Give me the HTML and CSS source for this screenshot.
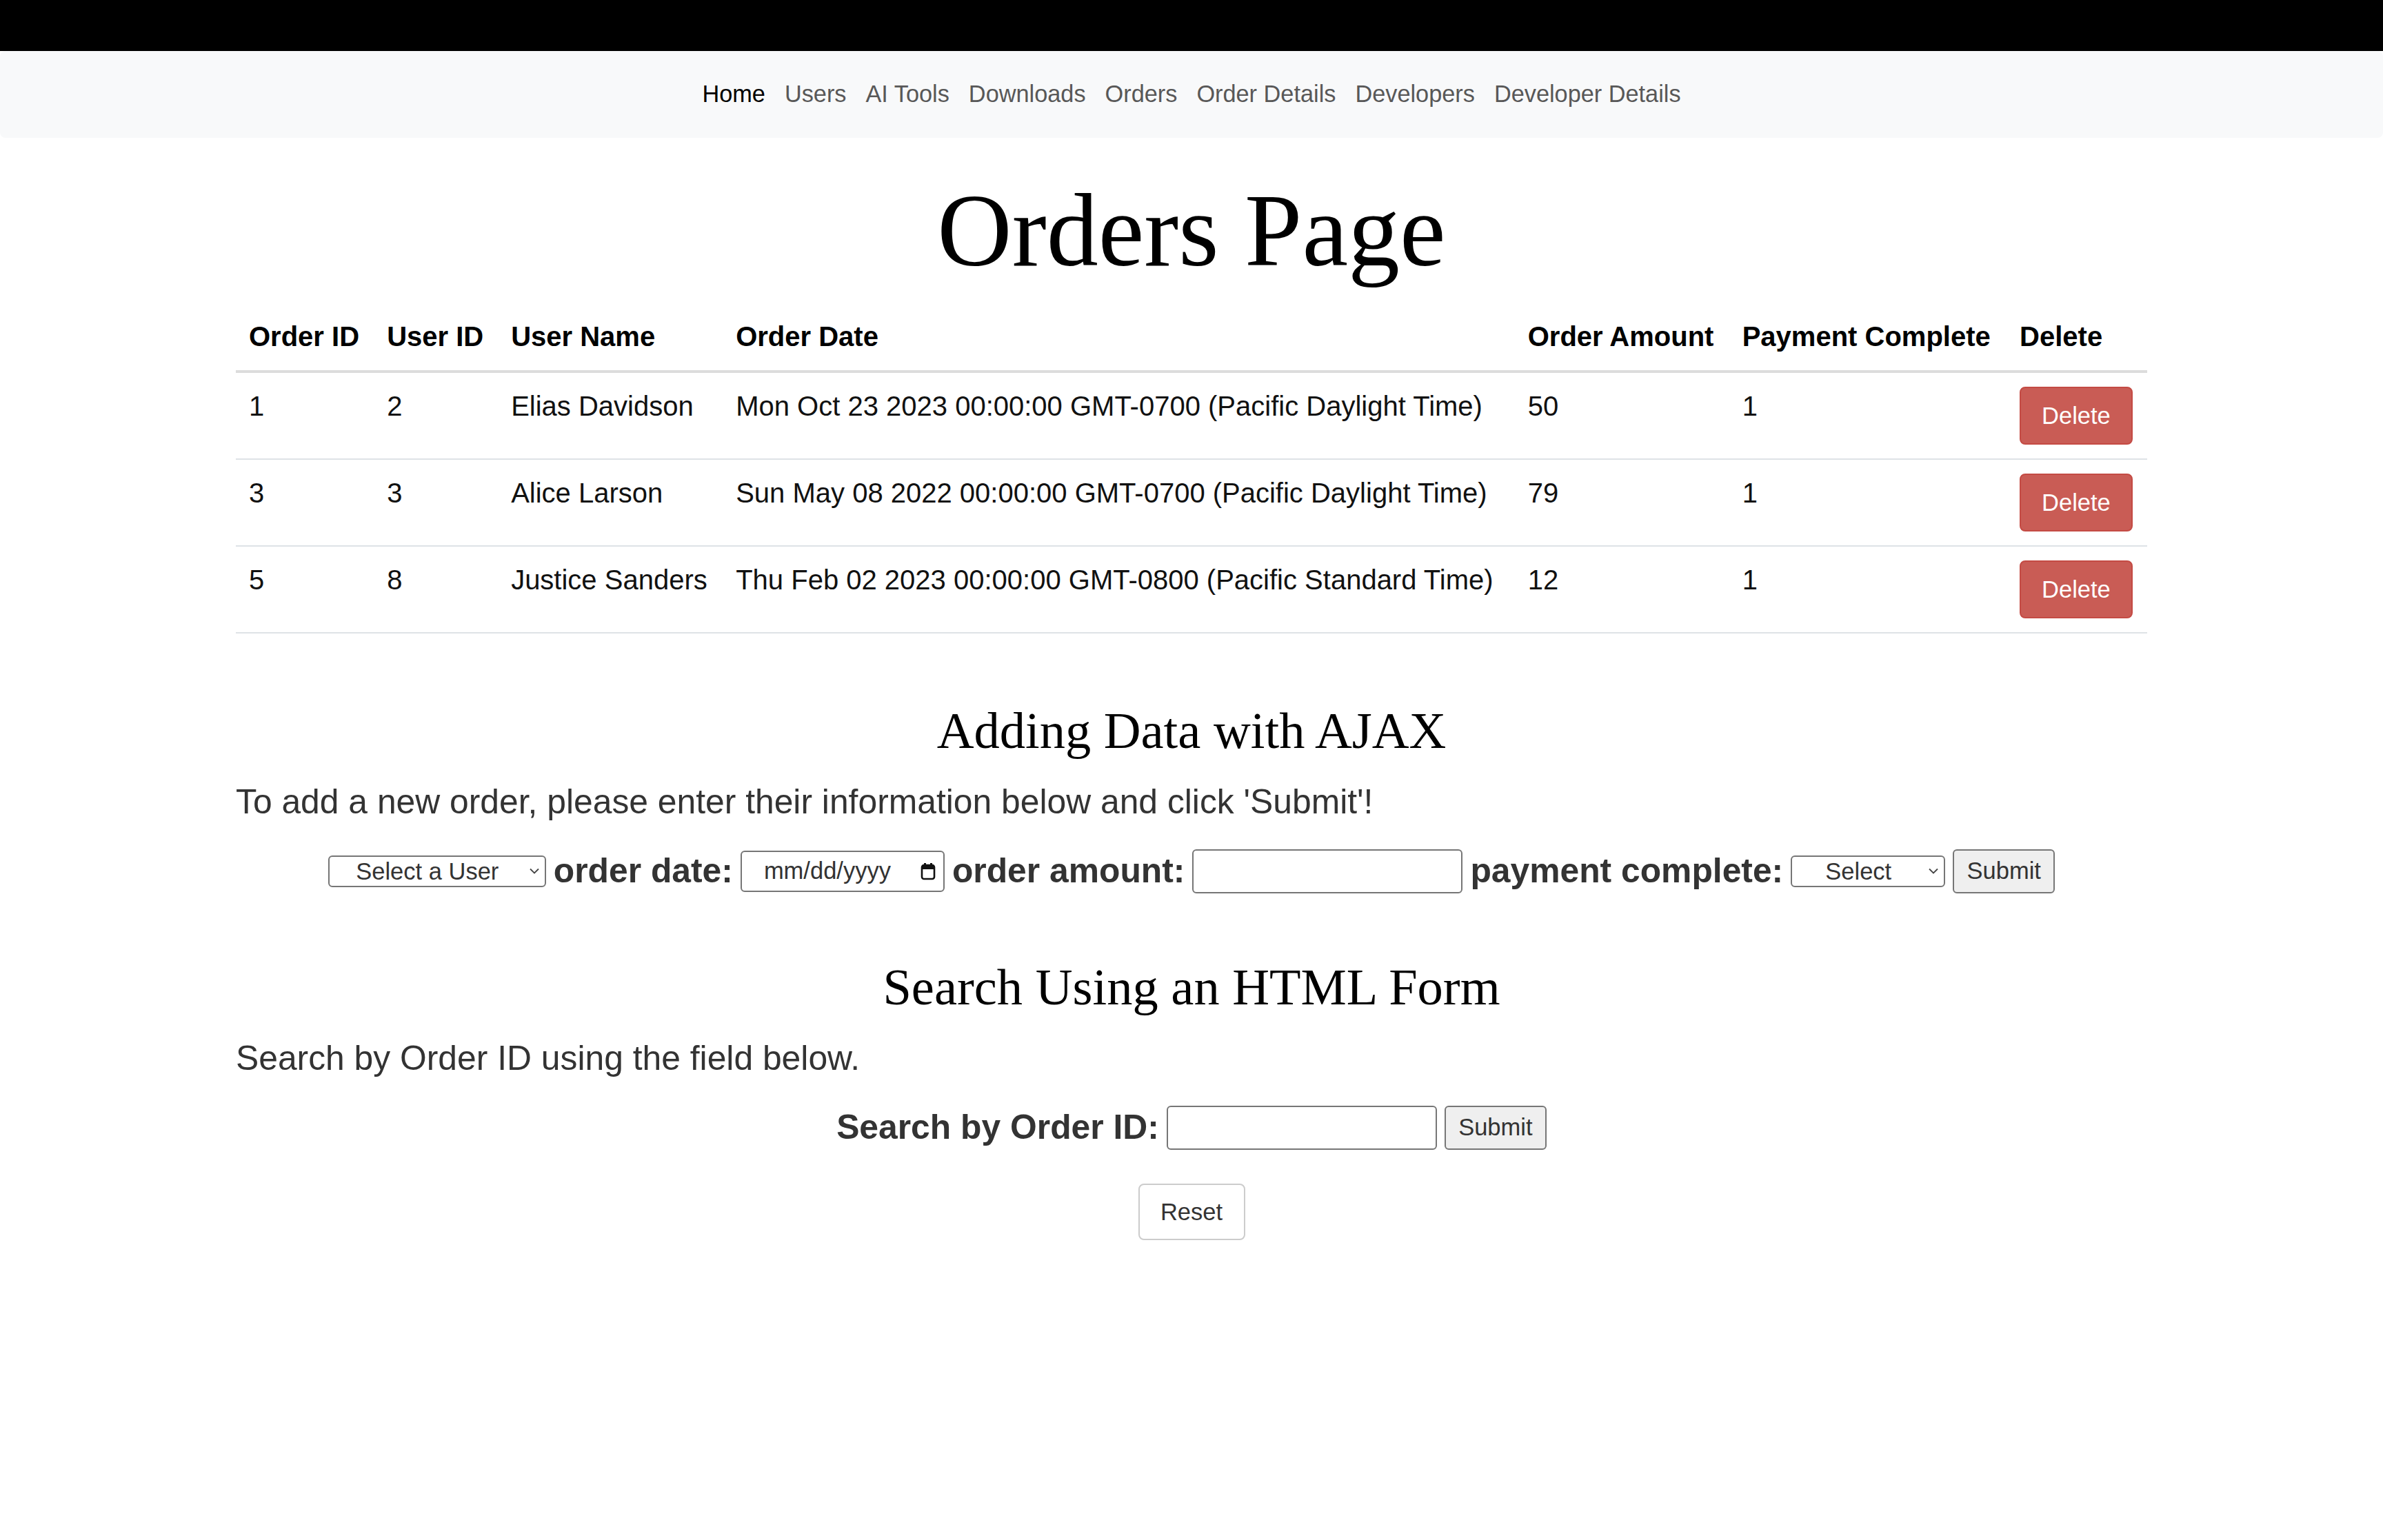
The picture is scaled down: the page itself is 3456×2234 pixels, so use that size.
FILE: index.html
```html
<!DOCTYPE html>
<html lang="en">
<head>
<meta charset="utf-8">
<title>Orders Page</title>
<link rel="stylesheet" href="styles.css">
</head>
<body>
<div class="topbar"></div>
<nav class="nav">
  <a class="nav-link active" href="#">Home</a>
  <a class="nav-link" href="#">Users</a>
  <a class="nav-link" href="#">AI Tools</a>
  <a class="nav-link" href="#">Downloads</a>
  <a class="nav-link" href="#">Orders</a>
  <a class="nav-link" href="#">Order Details</a>
  <a class="nav-link" href="#">Developers</a>
  <a class="nav-link" href="#">Developer Details</a>
</nav>
<main class="container">
  <h1 class="page-title">Orders Page</h1>
  <table class="orders">
    <thead>
      <tr>
        <th>Order ID</th>
        <th>User ID</th>
        <th>User Name</th>
        <th>Order Date</th>
        <th>Order Amount</th>
        <th>Payment Complete</th>
        <th>Delete</th>
      </tr>
    </thead>
    <tbody>
      <tr>
        <td>1</td>
        <td>2</td>
        <td>Elias Davidson</td>
        <td>Mon Oct 23 2023 00:00:00 GMT-0700 (Pacific Daylight Time)</td>
        <td>50</td>
        <td>1</td>
        <td><button class="btn-delete" type="button">Delete</button></td>
      </tr>
      <tr>
        <td>3</td>
        <td>3</td>
        <td>Alice Larson</td>
        <td>Sun May 08 2022 00:00:00 GMT-0700 (Pacific Daylight Time)</td>
        <td>79</td>
        <td>1</td>
        <td><button class="btn-delete" type="button">Delete</button></td>
      </tr>
      <tr>
        <td>5</td>
        <td>8</td>
        <td>Justice Sanders</td>
        <td>Thu Feb 02 2023 00:00:00 GMT-0800 (Pacific Standard Time)</td>
        <td>12</td>
        <td>1</td>
        <td><button class="btn-delete" type="button">Delete</button></td>
      </tr>
    </tbody>
  </table>

  <section class="block block-add">
    <h2 class="section-title">Adding Data with AJAX</h2>
    <p class="lead-text">To add a new order, please enter their information below and click 'Submit'!</p>
    <form class="inline-form">
      <span class="select-wrap user-select">
        <select class="field-select">
          <option>Select a User</option>
        </select>
        <svg class="chevron" width="14" height="9" viewBox="0 0 14 9"><path d="M1 1.5 L7 7.5 L13 1.5" fill="none" stroke="#444" stroke-width="1.8"/></svg>
      </span>
      <label class="field-label">order date:</label>
      <span class="date-wrap">
        <input class="field-date" type="text" value="" placeholder="mm/dd/yyyy">
        <svg class="cal-icon" width="22" height="26" viewBox="0 0 22 26"><rect x="2" y="4" width="18" height="20" rx="3" fill="none" stroke="#111" stroke-width="2.6"/><rect x="2" y="4" width="18" height="6" fill="#111"/><rect x="5" y="1" width="3" height="5" fill="#111"/><rect x="14" y="1" width="3" height="5" fill="#111"/></svg>
      </span>
      <label class="field-label">order amount:</label>
      <input class="field-text" type="text">
      <label class="field-label">payment complete:</label>
      <span class="select-wrap pay-select">
        <select class="field-select">
          <option>Select</option>
        </select>
        <svg class="chevron" width="14" height="9" viewBox="0 0 14 9"><path d="M1 1.5 L7 7.5 L13 1.5" fill="none" stroke="#444" stroke-width="1.8"/></svg>
      </span>
      <button class="btn-submit" type="button">Submit</button>
    </form>
  </section>

  <section class="block block-search">
    <h2 class="section-title">Search Using an HTML Form</h2>
    <p class="lead-text">Search by Order ID using the field below.</p>
    <form class="inline-form">
      <label class="field-label">Search by Order ID:</label>
      <input class="field-text" type="text">
      <button class="btn-submit" type="button">Submit</button>
    </form>
    <div class="reset-row">
      <button class="btn-reset" type="button">Reset</button>
    </div>
  </section>
</main>
</body>
</html>
```

FILE: styles.css
```css
html, body {
  margin: 0;
  padding: 0;
  background: #ffffff;
}

body {
  font-family: "Liberation Sans", Arial, Helvetica, sans-serif;
  color: #333333;
}

.topbar {
  height: 74px;
  background: #000000;
}

.nav {
  height: 126px;
  background: #f8f9fa;
  border-radius: 8px;
  display: flex;
  justify-content: center;
  align-items: center;
  gap: 28px;
}

.nav-link {
  font-size: 34.3px;
  color: #585858;
  text-decoration: none;
  line-height: 1.2;
}

.nav-link.active {
  color: #000000;
}

.container {
  width: 2772px;
  margin: 0 auto;
}

.page-title {
  font-family: "Liberation Serif", "Times New Roman", serif;
  font-weight: normal;
  font-size: 150px;
  line-height: 165px;
  text-align: center;
  color: #000000;
  margin: 52px 0 23px;
}

.orders {
  width: 100%;
  border-collapse: collapse;
  font-size: 40px;
  line-height: 57px;
  color: #111111;
}

.orders th {
  text-align: left;
  font-weight: bold;
  color: #000000;
  padding: 20px 19px;
  vertical-align: bottom;
  border-bottom: 4px solid #dcdcdc;
  white-space: nowrap;
}

.orders td {
  padding: 20px 19px;
  vertical-align: top;
  border-bottom: 2px solid #dee2e6;
  white-space: nowrap;
}

.btn-delete {
  display: block;
  height: 84px;
  padding: 0 30px;
  font-family: "Liberation Sans", Arial, sans-serif;
  font-size: 34.5px;
  color: #ffffff;
  background: #c95c55;
  border: 2px solid #c44b44;
  border-radius: 8px;
}

.section-title {
  font-family: "Liberation Serif", "Times New Roman", serif;
  font-weight: normal;
  font-size: 74.5px;
  line-height: 81px;
  text-align: center;
  color: #000000;
  margin: 0 0 27px;
}

.block-add {
  margin-top: 101px;
}

.block-search {
  margin-top: 96px;
}

.lead-text {
  font-size: 49.8px;
  line-height: 71px;
  margin: 0;
  color: #333333;
}

.inline-form {
  display: flex;
  justify-content: center;
  align-items: center;
  gap: 11px;
  margin-top: 32px;
  height: 65px;
}

.field-label {
  font-size: 49.8px;
  font-weight: bold;
  color: #333333;
  line-height: 1;
}

.select-wrap {
  position: relative;
  display: inline-block;
}

.field-select {
  appearance: none;
  -webkit-appearance: none;
  height: 46px;
  border: 2px solid #767676;
  border-radius: 6px;
  background: #ffffff;
  font-family: "Liberation Sans", Arial, sans-serif;
  font-size: 34.5px;
  color: #333333;
  text-align: center;
  text-align-last: center;
  padding: 0 28px 0 0;
  margin: 0;
  display: block;
}

.user-select .field-select {
  width: 316px;
}

.pay-select .field-select {
  width: 224px;
}

.chevron {
  position: absolute;
  right: 10px;
  top: 18px;
  pointer-events: none;
}

.date-wrap {
  position: relative;
  display: inline-block;
}

.field-date {
  display: block;
  box-sizing: border-box;
  width: 296px;
  height: 60px;
  border: 2px solid #767676;
  border-radius: 6px;
  font-family: "Liberation Sans", Arial, sans-serif;
  font-size: 34.5px;
  color: #333333;
  padding: 0 50px 0 32px;
  margin: 0;
}

.field-date::placeholder {
  color: #333333;
  opacity: 1;
}

.cal-icon {
  position: absolute;
  right: 13px;
  top: 17px;
  pointer-events: none;
}

.field-text {
  box-sizing: border-box;
  width: 392px;
  height: 64px;
  border: 2px solid #767676;
  border-radius: 6px;
  background: #ffffff;
  font-size: 34.5px;
  margin: 0;
  padding: 0 8px;
}

.btn-submit {
  box-sizing: border-box;
  width: 148px;
  height: 64px;
  padding: 0;
  background: #efefef;
  border: 2px solid #767676;
  border-radius: 6px;
  font-family: "Liberation Sans", Arial, sans-serif;
  font-size: 34.5px;
  color: #333333;
  margin: 0;
}

.reset-row {
  display: flex;
  justify-content: center;
  margin-top: 49px;
}

.btn-reset {
  box-sizing: border-box;
  width: 155px;
  height: 82px;
  background: #ffffff;
  border: 2px solid #cccccc;
  border-radius: 8px;
  font-family: "Liberation Sans", Arial, sans-serif;
  font-size: 34.5px;
  color: #333333;
  padding: 0;
}
```
